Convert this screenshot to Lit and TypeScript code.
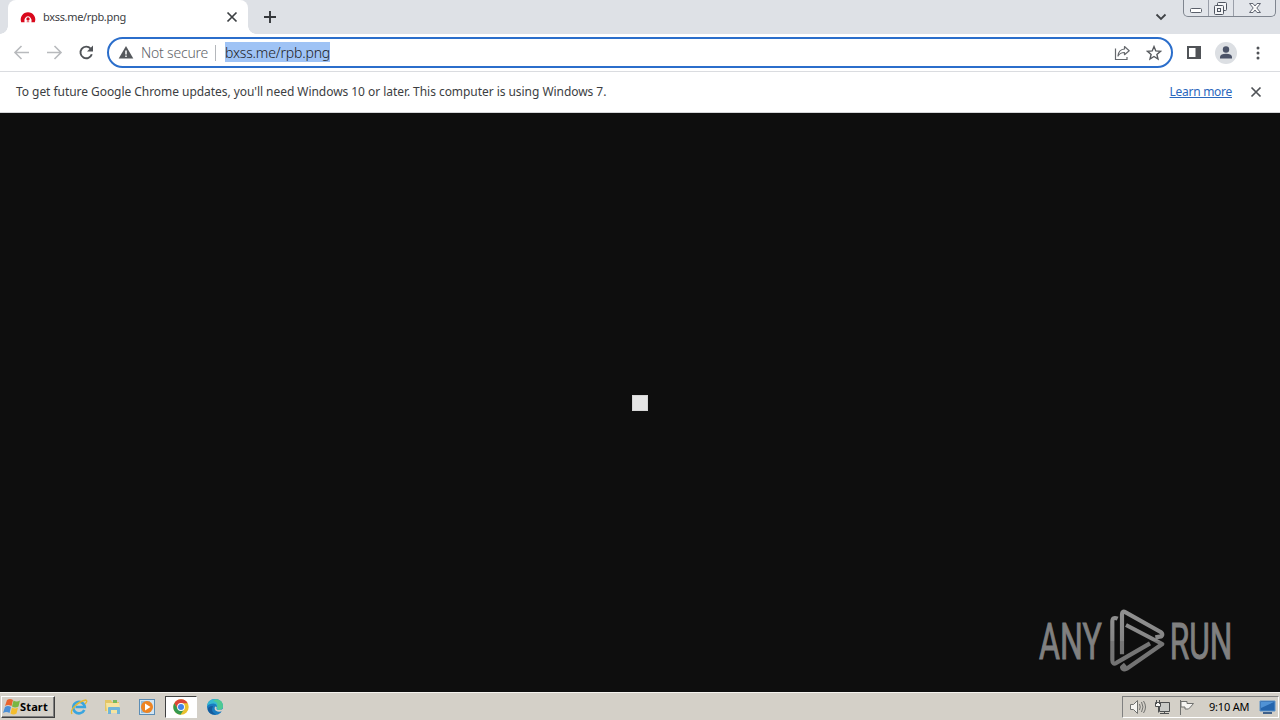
import { LitElement, html, css, svg } from 'lit';
import { customElement } from 'lit/decorators.js';

const closeIcon = html`
  <svg width="12" height="12" viewBox="0 0 12 12" fill="none" stroke="currentColor" stroke-width="1.7">
    <path d="M1.5 1.500l9 9M10.500 1.500l-9 9" />
  </svg>
`;

const windowsFlag = svg`
  <path d="M4 2Q7 0 10 2L8.500 8Q5 6 2 8Z" fill="#e8632c" />
  <path d="M10.500 2.500Q13.500 4.500 17 2.500L15.500 8.500Q12 10.500 9 8.500Z" fill="#79b642" />
  <path d="M2 9Q5 7 8 9L6.500 15Q3.500 13 0 15Z" fill="#4b8fd6" />
  <path d="M9 9.500Q12 11.500 15 9.500L13.500 15.500Q10.500 17.500 7.500 15.500Z" fill="#f4bd2d" />
`;

@customElement('chrome-tabs')
export class ChromeTabs extends LitElement {
  render() {
    return html`
      <div class="tab">
        <svg width="16" height="16" viewBox="0 0 16 16">
          <path d="M1.200 13.200A7.300 7.300 0 1 1 14.800 13.200H11.400Q12.400 8.400 8 8.200T4.600 13.200Z" fill="#d9081c" />
          <circle cx="8" cy="9.800" r="2.600" fill="#fff" />
          <circle cx="8" cy="10" r="1.700" fill="#d9081c" />
          <path d="M6.500 13.200l.6-1.500h1.800l.6 1.500z" fill="#e9737c" />
        </svg>
        <span class="title">bxss.me/rpb.png</span>
        ${closeIcon}
      </div>
      <svg class="add" width="14" height="14" viewBox="0 0 14 14">
        <path d="M7 1v12M1 7h12" stroke="#34373b" stroke-width="1.9" />
      </svg>
      <svg class="search" width="12" height="12" viewBox="0 0 12 12">
        <path d="M1.500 3.500L6 8l4.500-4.500" fill="none" stroke="#3f4246" stroke-width="1.8" />
      </svg>
      <div class="controls">
        <span class="control">
          <svg width="24" height="17" viewBox="0 0 24 17">
            <rect x="6.500" y="8.500" width="11" height="4" rx="1" fill="#fff" stroke="#5b606b" />
          </svg>
        </span>
        <span class="control">
          <svg width="24" height="17" viewBox="0 0 24 17" fill="#f4f5f7" stroke="#4f5560">
            <rect x="8.500" y="2.500" width="9" height="8" rx="1" />
            <rect x="5.500" y="5.500" width="9" height="9" rx="1" />
            <rect x="8.500" y="8.500" width="3" height="3" />
          </svg>
        </span>
        <span class="control wide">
          <svg width="42" height="17" viewBox="0 0 42 17">
            <path
              d="M15.500 3.500h3.500l2 2.500 2-2.500h3.500l-3.700 4.500 3.700 4.500h-3.500l-2-2.500-2 2.500h-3.500l3.700-4.500z"
              fill="#fafafa"
              stroke="#626773"
            />
          </svg>
        </span>
      </div>
    `;
  }

  static styles = css`
    :host {
      display: flex;
      align-items: flex-start;
      box-sizing: border-box;
      height: 34px;
      padding-left: 8px;
      background: #dee1e6;
      font: 11px 'Noto Sans', sans-serif;
    }

    .tab {
      position: relative;
      display: flex;
      align-items: center;
      box-sizing: border-box;
      width: 240px;
      height: 34px;
      padding: 0 10px 0 12px;
      border-radius: 8px 8px 0 0;
      background: #fff;
      color: #3c4043;
    }

    .tab::before,
    .tab::after {
      position: absolute;
      bottom: 0;
      width: 8px;
      height: 8px;
      content: '';
    }

    .tab::before {
      left: -8px;
      background: radial-gradient(circle at 0 0, #dee1e6 7.5px, #fff 8px);
    }

    .tab::after {
      right: -8px;
      background: radial-gradient(circle at 100% 0, #dee1e6 7.5px, #fff 8px);
    }

    .title {
      flex: 1;
      margin: 0 0 2px 7px;
      letter-spacing: -0.33px;
    }

    .add {
      margin: 10px 0 0 15px;
    }

    .search {
      margin: 11px 16px 0 auto;
    }

    .controls {
      display: flex;
      box-sizing: border-box;
      width: 93px;
      height: 17px;
      margin-right: 4px;
      overflow: hidden;
      border: 1px solid #7f858f;
      border-top: 0;
      border-radius: 0 0 5px 5px;
      background: #e2e5ea;
    }

    .control {
      width: 24px;
      border-right: 1px solid #9a9fa9;
    }

    .control.wide {
      width: 42px;
      border-right: 0;
    }
  `;
}

@customElement('chrome-toolbar')
export class ChromeToolbar extends LitElement {
  render() {
    return html`
      <svg class="nav" width="98" height="20" viewBox="0 0 98 20" fill="none" stroke-width="1.6">
        <path d="M20 9.500H6M12.500 3L6 9.500l6.500 6.500" stroke="#b8babd" />
        <path d="M38 9.500h14M45.500 3L52 9.500l-6.500 6.500" stroke="#b8babd" />
        <path d="M81.600 5.600A5.800 5.800 0 1 0 82.800 11.200" stroke="#505357" stroke-width="1.900" />
        <path d="M84 2.500v6h-6z" fill="#505357" />
      </svg>
      <div class="omnibox">
        <svg class="warning" width="16" height="14" viewBox="0 0 16 14">
          <path d="M8 0L15.300 12.500H.700z" fill="#55585c" />
          <path d="M8 4.500v4M8 9.500v1.600" stroke="#fff" stroke-width="1.500" />
        </svg>
        <span class="security">Not secure</span>
        <span class="divider"></span>
        <span class="url">bxss.me/rpb.png</span>
        <svg class="share" width="16" height="16" viewBox="0 0 16 16" fill="none" stroke="#66696d" stroke-width="1.200">
          <path d="M1.500 3.500v11h11.500V12" />
          <path d="M10.500 1.500l4.700 4.200-4.700 4V7.500Q6 7.500 4 11Q4.500 4.500 10.500 4z" stroke-linejoin="round" />
        </svg>
        <svg class="star" width="16" height="16" viewBox="0 0 16 16">
          <path
            d="M8 1.600l1.800 4.300 4.700.4-3.600 3.100 1.100 4.600L8 11.500 4 14l1.100-4.600L1.500 6.300l4.700-.4z"
            fill="none"
            stroke="#56595d"
            stroke-width="1.400"
          />
        </svg>
      </div>
      <svg class="panel" width="16" height="16" viewBox="0 0 16 16">
        <path d="M1 1h14v13H1zM3 3v9h6.500V3z" fill="#505357" fill-rule="evenodd" />
      </svg>
      <svg class="avatar" width="22" height="22" viewBox="0 0 22 22">
        <circle cx="11" cy="11" r="11" fill="#dcdfe3" />
        <circle cx="11" cy="7.500" r="3.200" fill="#4b5368" />
        <path d="M5 16.500v-1.700Q5.500 11.800 11 11.800t6 3v1.700z" fill="#4b5368" />
      </svg>
      <svg class="menu" width="4" height="14" viewBox="0 0 4 14" fill="#505357">
        <circle cx="2" cy="2" r="1.500" />
        <circle cx="2" cy="7" r="1.500" />
        <circle cx="2" cy="12" r="1.500" />
      </svg>
    `;
  }

  static styles = css`
    :host {
      display: flex;
      align-items: center;
      box-sizing: border-box;
      height: 38px;
      padding: 0 20px 0 9px;
      border-bottom: 1px solid #dadce0;
      background: #fff;
      font: 14px 'Noto Sans', sans-serif;
    }

    .omnibox {
      display: flex;
      flex: 1;
      align-items: center;
      box-sizing: border-box;
      height: 31px;
      padding: 0 9px;
      border: 2px solid #2b6ecb;
      border-radius: 16px;
    }

    .security {
      width: 67px;
      margin-left: 7px;
      color: #5f6368;
      font-weight: 300;
      letter-spacing: -0.2px;
      white-space: nowrap;
    }

    .divider {
      width: 1px;
      height: 16px;
      margin: 0 9px 0 7px;
      background: #b4b7bb;
    }

    .url {
      height: 20px;
      margin: 0 auto 1px 0;
      background: #9fc3f5;
      color: #202124;
      font-weight: 300;
      letter-spacing: -0.17px;
      line-height: 21px;
    }

    .star {
      margin-left: 16px;
    }

    .panel {
      margin-left: 13px;
    }

    .avatar {
      margin: 0 19px 0 13px;
    }
  `;
}

@customElement('update-bar')
export class UpdateBar extends LitElement {
  render() {
    return html`
      <span class="message"
        >To get future Google Chrome updates, you'll need Windows 10 or later. This computer is using Windows 7.</span
      >
      <a class="link">Learn more</a>
      ${closeIcon}
    `;
  }

  static styles = css`
    :host {
      display: flex;
      align-items: center;
      box-sizing: border-box;
      height: 41px;
      padding: 0 18px 0 16px;
      border-bottom: 1px solid #d5d6d8;
      background: #fff;
      color: #505357;
      font: 12px 'Noto Sans', sans-serif;
      white-space: nowrap;
    }

    .message {
      margin-bottom: 2px;
      color: #3c3e42;
      letter-spacing: -0.05px;
    }

    .link {
      margin: 0 18px 2px auto;
      color: #2b67bd;
      letter-spacing: -0.28px;
      text-decoration: underline;
    }
  `;
}

@customElement('any-run-mark')
export class AnyRunMark extends LitElement {
  render() {
    return html`
      <svg width="230" height="85" viewBox="0 0 690 255">
        <defs>
          <linearGradient id="fade" gradientUnits="userSpaceOnUse" x1="0" y1="30" x2="0" y2="215">
            <stop offset="0" stop-color="#919191" />
            <stop offset="0.5" stop-color="#858585" />
            <stop offset="0.5" stop-color="#767676" />
            <stop offset="1" stop-color="#727272" />
          </linearGradient>
        </defs>
        <g class="letters" fill="#808080" stroke="#808080" stroke-width="3">
          <text x="57" y="177" textLength="188" lengthAdjust="spacingAndGlyphs">ANY</text>
          <text x="449" y="177" textLength="188" lengthAdjust="spacingAndGlyphs">RUN</text>
        </g>
        <g fill="none" stroke="url(#fade)" stroke-width="12.500" stroke-linejoin="round">
          <path d="M306 163V43Q306 31 317 37L422 96Q431 103 424 109L406 112" />
          <path d="M318 75L427 132L320 206Q308 212 306 202L316 193" />
          <path d="M293 56Q277 49 277 65V180Q277 196 290 188L390 130" />
        </g>
      </svg>
    `;
  }

  static styles = css`
    :host {
      position: absolute;
      right: 30px;
      bottom: 7px;
    }

    svg {
      display: block;
      overflow: visible;
    }

    .letters {
      font: 150px Roboto, sans-serif;
    }
  `;
}

@customElement('task-bar')
export class TaskBar extends LitElement {
  render() {
    return html`
      <div class="start">
        <svg width="17" height="17" viewBox="0 0 17 17">${windowsFlag}</svg>
        <span>Start</span>
      </div>
      <div class="apps">
        <span class="app">
          <svg width="18" height="18" viewBox="0 0 18 18" fill="none">
            <path d="M14.300 12A5.800 5.800 0 1 1 14.800 9H5.500" stroke="#39a5df" stroke-width="2.600" />
            <path d="M2 16Q0 13 5 8T16 2Q18 3 15 6" stroke="#e5b932" stroke-width="1.300" />
          </svg>
        </span>
        <span class="app">
          <svg width="18" height="18" viewBox="0 0 18 18">
            <path d="M1 2h6l1 2h7v9H1z" fill="#e3c566" />
            <path d="M9 2h4v3H9z" fill="#75b95d" />
            <path d="M2 5h13l1 5v5H3z" fill="#f5e4a0" />
            <path d="M4 16v-6q0-1 1-1h10q1 0 1 1v6h-3v-4H7v4z" fill="#70b5d9" />
          </svg>
        </span>
        <span class="app">
          <svg width="18" height="18" viewBox="0 0 18 18">
            <rect x="1.500" y="1.500" width="15" height="15" fill="#d2e5f3" stroke="#5c8db5" />
            <rect x="3" y="3" width="9" height="12" fill="#92bddd" />
            <circle cx="9" cy="9" r="6" fill="#ee8422" />
            <path d="M7 5.500L12.500 9 7 12.500z" fill="#fff" />
          </svg>
        </span>
        <span class="app active">
          <svg width="16" height="16" viewBox="0 0 16 16">
            <circle cx="8" cy="8" r="7.700" fill="#eac12e" />
            <path d="M1.300 4.200A7.700 7.700 0 0 1 14.700 4.200H8L4.700 10z" fill="#dc4639" />
            <path d="M1.300 4.200L4.800 10 8 11.500 11.200 10 7.500 15.700A7.700 7.700 0 0 1 1.300 4.200z" fill="#35994f" />
            <circle cx="8" cy="8" r="3.900" fill="#fff" />
            <circle cx="8" cy="8" r="3" fill="#4384e9" />
          </svg>
        </span>
        <span class="app">
          <svg width="18" height="18" viewBox="0 0 18 18">
            <circle cx="9" cy="9" r="8" fill="#197bc0" />
            <path d="M1 8Q2 1 9 1T17 8Q17 12 12.500 12Q10 12 10.500 10Q12 6 7.500 5.500Q3 5.500 1 8z" fill="#35b9d1" />
            <path d="M10 1.200Q17 2 17 8 17 12 12.500 12L11 9Q13 4 7 3z" fill="#4fc993" />
            <path d="M7 8Q4 14 10 16.500 4 17 2 12.500 1 8 7 8z" fill="#155b9c" />
            <path d="M9 8.500Q7.500 12.500 11.500 13.600 14.500 14.200 17.500 12.500V10.500Q15 12.300 12 12 9.800 11.500 10.700 9z" fill="#d4d0c8" />
          </svg>
        </span>
      </div>
      <div class="tray">
        <svg width="66" height="18" viewBox="0 0 66 18" fill="#f6f5f2" stroke="#70716f">
          <path d="M1.500 6.500h3l4-4v13l-4-4h-3z" />
          <path d="M10.500 6q1.500 3 0 6M12.500 4q3 5 0 10M14.500 3q4 6 0 12" fill="none" />
          <path d="M30.500 4.500h10v9h-10z" stroke="#4d4f50" fill="#c9cac7" />
          <path d="M27.500 2v4M30.500 2v4M26.500 4.500h5v4h-5zM29.500 8.500v6M35.500 13v2M31 15.500h9" stroke="#4d4f50" />
          <path d="M51.500 2v15" />
          <path d="M52 3.500h6v2h6.500L61.500 9l-2 2h-3.500v-2H52z" />
        </svg>
        <span class="clock">9:10 AM</span>
        <svg width="17" height="16" viewBox="0 0 17 16">
          <path d="M1 2h15v10H1z" fill="#2465ad" stroke="#5b92c9" />
          <path d="M2 3h13L2 9z" fill="#4f92d5" />
          <path d="M4 14h9" stroke="#40618a" stroke-width="2" />
        </svg>
      </div>
    `;
  }

  static styles = css`
    :host {
      display: flex;
      align-items: center;
      box-sizing: border-box;
      height: 28px;
      padding: 1px 1px 1px 1px;
      border-top: 1px solid #f4f2ee;
      background: #d4d0c8;
      color: #000;
      font: 11px 'Noto Sans', sans-serif;
    }

    .start {
      display: flex;
      align-items: center;
      box-sizing: border-box;
      width: 54px;
      height: 22px;
      padding-left: 1px;
      border: 1px solid;
      border-color: #fff #404040 #404040 #fff;
      box-shadow: inset -1px -1px #808080;
      font-weight: 700;
      letter-spacing: 0.15px;
    }

    .apps {
      display: flex;
      margin-left: 8px;
    }

    .app {
      display: flex;
      align-items: center;
      justify-content: center;
      box-sizing: border-box;
      width: 32px;
      height: 22px;
      margin-right: 2px;
    }

    .app.active {
      border: 1px solid;
      border-color: #404040 #fff #fff #404040;
      background: #fff;
    }

    .tray {
      display: flex;
      align-items: center;
      box-sizing: border-box;
      width: 157px;
      height: 22px;
      margin-left: auto;
      padding: 0 2px 0 6px;
      border: 1px solid;
      border-color: #808080 #fff #fff #808080;
    }

    .clock {
      margin: 0 auto 0 14px;
      letter-spacing: -0.2px;
      white-space: nowrap;
    }
  `;
}

@customElement('app-root')
export class AppRoot extends LitElement {
  render() {
    return html`
      <chrome-tabs></chrome-tabs>
      <chrome-toolbar></chrome-toolbar>
      <update-bar></update-bar>
      <main class="page">
        <div class="image"></div>
        <any-run-mark></any-run-mark>
      </main>
      <task-bar></task-bar>
    `;
  }

  static styles = css`
    :host {
      display: flex;
      flex-direction: column;
      width: 1280px;
      height: 720px;
      overflow: hidden;
    }

    .page {
      position: relative;
      display: flex;
      flex: 1;
      align-items: center;
      justify-content: center;
      background: #0e0e0e;
    }

    .image {
      box-sizing: border-box;
      width: 16px;
      height: 16px;
      border: 1px solid #d6d6d6;
      background: #e6e6e6;
    }
  `;
}
